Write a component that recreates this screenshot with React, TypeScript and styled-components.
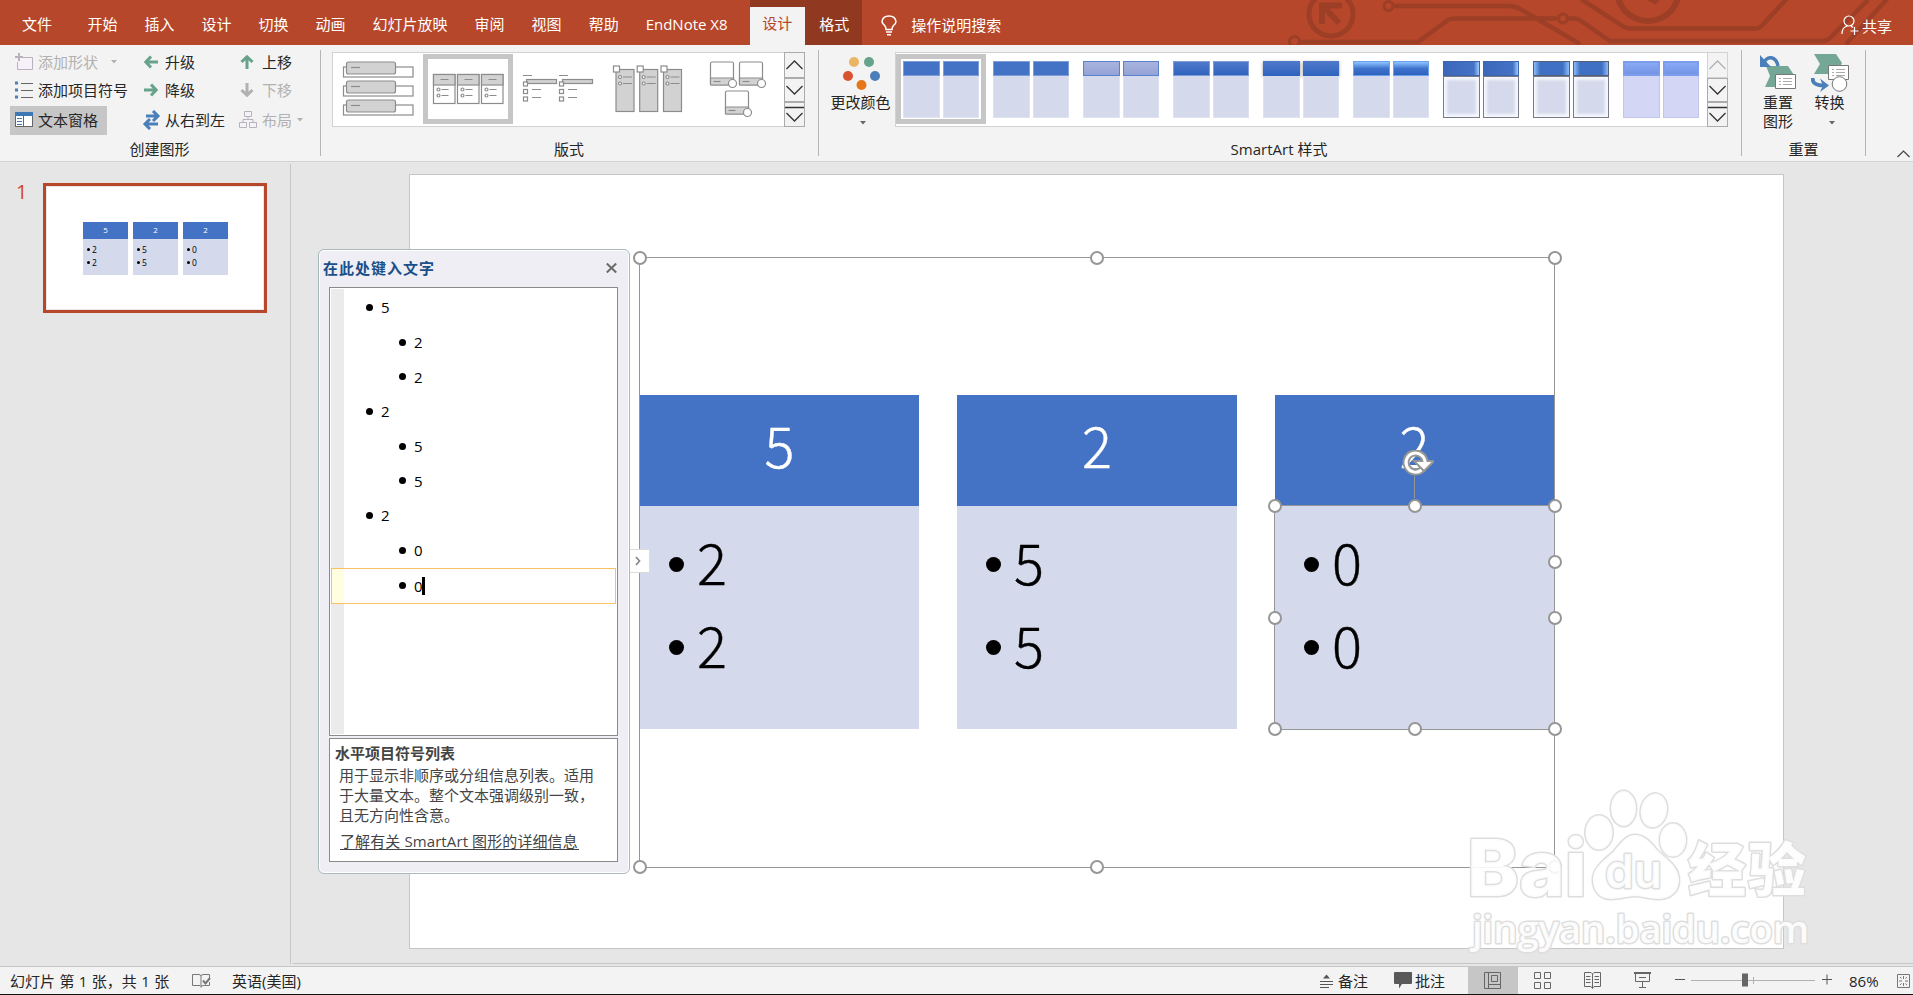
import React from 'react';
import styled, { createGlobalStyle, css } from 'styled-components';

const GlobalStyle = createGlobalStyle`
    * {
        box-sizing: border-box;
    }
    body {
        margin: 0;
        overflow: hidden;
        background: #e6e6e6;
        color: #262626;
        font-family: 'Open Sans', 'Noto Sans CJK SC', sans-serif;
        font-size: 15px;
    }
    svg {
        display: block;
        flex: none;
    }
`;

const tabs = ['开始', '插入', '设计', '切换', '动画', '幻灯片放映', '审阅', '视图', '帮助'];

const columns = [
    { title: '5', items: ['2', '2'] },
    { title: '2', items: ['5', '5'] },
    { title: '2', items: ['0', '0'] },
];

const frameHandles = [
    [0, 0],
    [457, 0],
    [915, 0],
    [0, 609],
    [457, 609],
    [915, 609],
    [915, 304],
];

const shapeHandles = [
    [635, 248],
    [775, 248],
    [915, 248],
    [635, 360],
    [915, 360],
    [635, 471],
    [775, 471],
    [915, 471],
];

const styleKinds = ['flat', 'flat', 'pale', 'subtle', 'shadow', 'gloss', 'inset', 'bevel', 'violet'];

const Circuit = () => (
    <CircuitArt width="620" height="45" viewBox="1285 0 620 45">
        <g fill="none" stroke="#9c3f26" strokeWidth="4.5">
            <ellipse cx="1331" cy="14" rx="22" ry="22" strokeWidth="5" />
            <path d="M1322 24V5.500H1342M1323 6l16 17" strokeWidth="6" />
            <circle cx="1388.500" cy="6" r="4.500" strokeWidth="3" />
            <path d="M1393 6h117q6 0 12 4l58 34" />
            <circle cx="1294.500" cy="41.500" r="5" strokeWidth="3" />
            <path d="M1300 42h118l30-22q3-1.500 7-1.500h102" />
            <circle cx="1563" cy="18.500" r="4.500" strokeWidth="3" />
            <path d="M1568 18.500h6q4 0 8 3l28 19.500h212q5 0 8-3l38-38" />
            <path d="M1581-1l40 26q5 3.500 9 3.500h125q5 0 8-4l24-26M1846 44l42-46" />
            <circle cx="1648" cy="-10" r="31" strokeWidth="6" />
            <path d="M1640-6l15 8 8-8" />
        </g>
    </CircuitArt>
);

const LayoutThumb = ({ index }: { index: number }) => (
    <svg width="90" height="74" fill="#fff" stroke="#8c8c8c" strokeWidth="1.200">
        {index === 0 &&
            [0, 19, 38].map((y) => (
                <g key={y}>
                    <rect x="10.500" y={14 + y} width="69.500" height="10" />
                    <rect x="13.500" y={9 + y} width="49" height="12" rx="2" fill="#d2d2d2" />
                    <path d={`M18 ${14.5 + y}h9`} />
                </g>
            ))}
        {index === 1 &&
            [10.5, 34.5, 58.5].map((x) => (
                <g key={x}>
                    <rect x={x} y="21.500" width="21.500" height="29" />
                    <rect x={x} y="21.500" width="21.500" height="10.500" fill="#d2d2d2" />
                    <path d={`M${x + 7} 26.500h8M${x + 8} 36.500h7M${x + 8} 42.500h7`} />
                    <circle cx={x + 5} cy="36.500" r="1.500" />
                    <circle cx={x + 5} cy="42.500" r="1.500" />
                </g>
            ))}
        {index === 2 &&
            [0, 36].map((x) => (
                <g key={x}>
                    <path d={`M${x + 10} 22.500h9M${x + 19} 36.500h9M${x + 19} 44.500h9`} />
                    <rect x={x + 13.5} y="26.500" width="30" height="4" fill="#d2d2d2" />
                    <rect x={x + 10.5} y="29" width="4" height="4" />
                    <rect x={x + 10.5} y="36.500" width="4" height="4" />
                    <rect x={x + 10.5} y="44" width="4" height="4" />
                </g>
            ))}
        {index === 3 &&
            [0, 23.7, 47.5].map((x) => (
                <g key={x}>
                    <rect x={x + 13} y="16.500" width="18" height="42" fill="#d2d2d2" />
                    <rect x={x + 10.5} y="13" width="6" height="6" />
                    <circle cx={x + 17} cy="24" r="1.500" />
                    <circle cx={x + 17} cy="30.500" r="1.500" />
                    <path d={`M${x + 20} 24h9M${x + 20} 30.500h9`} />
                </g>
            ))}
        {index === 4 &&
            [
                [17.5, 9],
                [46.5, 9],
                [32.5, 38],
            ].map(([x, y]) => (
                <g key={x}>
                    <rect x={x} y={y} width="23" height="23" rx="1.500" />
                    <path d={`M${x} ${y + 16}h23v7h-23z`} fill="#d2d2d2" />
                    <path d={`M${x + 3} ${y + 19.5}h7`} />
                    <circle cx={x + 22} cy={y + 21.5} r="4" />
                </g>
            ))}
    </svg>
);

const GalleryScroll = ({ topDisabled }: { topDisabled?: boolean }) => (
    <ScrollColumn>
        <ScrollButton $h={26} $disabled={topDisabled}>
            <svg width="19" height="12" fill="none" stroke="currentColor" strokeWidth="1.300">
                <path d="M1.500 10l8-8 8 8" />
            </svg>
        </ScrollButton>
        <ScrollButton $h={24}>
            <svg width="19" height="12" fill="none" stroke="currentColor" strokeWidth="1.300">
                <path d="M1.500 2l8 8 8-8" />
            </svg>
        </ScrollButton>
        <ScrollButton $h={25}>
            <svg width="19" height="20" fill="none" stroke="currentColor" strokeWidth="1.300">
                <path d="M0 2.500h19M1.500 8l8 8 8-8" />
            </svg>
        </ScrollButton>
    </ScrollColumn>
);

const MoveArrow = ({ rotate, color = '#67a38c' }: { rotate: number; color?: string }) => (
    <svg width="14" height="14" viewBox="0 0 14 14" fill="none" stroke={color} strokeWidth="3">
        <path transform={`rotate(${rotate} 7 7)`} d="M14 7H2M7 1.500L1.800 7 7 12.500" />
    </svg>
);

const Caret = ({ color = '#666' }: { color?: string }) => (
    <svg width="6" height="4" fill={color}>
        <path d="M0 0h6L3 3.500z" />
    </svg>
);

const CreateGraphic = () => (
    <Group $w={321}>
        <CommandGrid>
            <Command $disabled>
                <svg width="18" height="18" fill="none" stroke="#b9b1bd">
                    <path d="M8 4.500h9.500v12h-15V9" fill="#f6f0f8" />
                    <path d="M4 0v8M0 4h8" strokeWidth="2" />
                </svg>
                添加形状
                <CaretSpace>
                    <Caret color="#b1b1b1" />
                </CaretSpace>
            </Command>
            <Command>
                <MoveArrow rotate={0} />
                升级
            </Command>
            <Command>
                <MoveArrow rotate={90} />
                上移
            </Command>
            <Command>
                <svg width="18" height="18" stroke="#666">
                    <path d="M6 2.500h12M6 9.500h12M6 16.500h12" />
                    <path d="M0 2h3M0 9h3M0 16h3" stroke="#4a7fb9" strokeWidth="3" />
                </svg>
                添加项目符号
            </Command>
            <Command>
                <MoveArrow rotate={180} />
                降级
            </Command>
            <Command $disabled>
                <MoveArrow rotate={270} color="#b1b1b1" />
                下移
            </Command>
            <Command $active>
                <svg width="18" height="15">
                    <rect x=".5" y=".5" width="17" height="14" fill="#fff" stroke="#666" />
                    <path d="M0 0h18v4H0z" fill="#3e78b5" />
                    <path d="M8.500 4v11" stroke="#666" />
                    <path d="M2 6.500h5M2 9.500h5M2 12.500h5" stroke="#3e78b5" />
                </svg>
                文本窗格
            </Command>
            <Command>
                <SwapArrows width="19" height="20" fill="none" stroke="#4a7fb9" strokeWidth="3">
                    <path d="M4 6h12M11 1l5 5-5 5M16 14H3M8 9l-5 5 5 5" />
                </SwapArrows>
                从右到左
            </Command>
            <Command $disabled>
                <Hierarchy width="18" height="17" fill="none" stroke="#b9b1bd">
                    <path d="M5.500.5h7v5h-7zM.5 11.500h7v5h-7zM10.500 11.500h7v5h-7zM9 5.500v3M4 11V8.500h10V11" />
                </Hierarchy>
                布局
                <TightCaret>
                    <Caret color="#b1b1b1" />
                </TightCaret>
            </Command>
        </CommandGrid>
        <GroupLabel $shift={-1}>创建图形</GroupLabel>
    </Group>
);

const Ribbon = () => (
    <RibbonBar>
        <CreateGraphic />
        <Group $w={498}>
            <GalleryRow $left={11}>
                <Gallery>
                    {[0, 1, 2, 3, 4].map((i) => (
                        <GalleryItem key={i} $selected={i === 1}>
                            <LayoutThumb index={i} />
                        </GalleryItem>
                    ))}
                    <GalleryScroll />
                </Gallery>
            </GalleryRow>
            <GroupLabel $shift={-1}>版式</GroupLabel>
        </Group>
        <Group $w={923}>
            <GalleryRow $left={7}>
                <BigButton $w={69}>
                    <svg width="38" height="36">
                        <circle cx="12" cy="8" r="5" fill="#eab565" />
                        <circle cx="27" cy="8" r="5" fill="#67a38c" />
                        <circle cx="6" cy="22" r="5" fill="#d9532f" />
                        <circle cx="33" cy="22" r="5" fill="#4a7fb9" />
                        <circle cx="19.500" cy="31" r="5" fill="#e5771a" />
                    </svg>
                    <span>更改颜色</span>
                    <Caret />
                </BigButton>
                <Gallery>
                    {styleKinds.map((kind, i) => (
                        <GalleryItem key={i} $selected={i === 0}>
                            <StyleThumb>
                                {[0, 1].map((n) => (
                                    <StyleSwatch key={n}>
                                        <SwatchHead $kind={kind} />
                                        <SwatchBody $kind={kind} />
                                    </StyleSwatch>
                                ))}
                            </StyleThumb>
                        </GalleryItem>
                    ))}
                    <GalleryScroll topDisabled />
                </Gallery>
            </GalleryRow>
            <GroupLabel $shift={-2}>SmartArt 样式</GroupLabel>
        </Group>
        <Group $w={124}>
            <GalleryRow $left={10}>
                <BigButton $w={52}>
                    <svg width="36" height="36">
                        <path d="M6 12h22l6 9-6 12H5l5-11z" fill="#74a795" />
                        <path d="M18 12C16 2 7 1 4 9" fill="none" stroke="#4a7fb9" strokeWidth="3.500" />
                        <path d="M0 1v12h11z" fill="#4a7fb9" />
                        <path d="M15.500 20.500h20v14h-20z" fill="#fff" stroke="#777" />
                        <path d="M19 24.500h2m2 0h9M19 27.500h2m2 0h9M19 30.500h2m2 0h9" stroke="#aaa" />
                    </svg>
                    <span>重置</span>
                    <span>图形</span>
                </BigButton>
                <BigButton $w={51}>
                    <svg width="38" height="38">
                        <path d="M3 0h22l6 9-6 11H3l6-10z" fill="#74a795" />
                        <path d="M17.500 11.500h20v14h-20z" fill="#fff" stroke="#777" />
                        <path d="M21 15.500h2m2 0h9M21 18.500h2m2 0h9M21 21.500h2m2 0h9" stroke="#aaa" />
                        <circle cx="28.500" cy="30" r="7.300" fill="#fff" stroke="#777" />
                        <path d="M1.500 24c0 6 4 7.500 11 7.500" fill="none" stroke="#4a7fb9" strokeWidth="4" />
                        <path d="M9 24.500l9 7-9 6.500 3-6.500z" fill="#4a7fb9" />
                    </svg>
                    <span>转换</span>
                    <Caret />
                </BigButton>
            </GalleryRow>
            <GroupLabel>重置</GroupLabel>
        </Group>
        <Collapse>
            <svg width="13" height="8" fill="none" stroke="#444" strokeWidth="1.200">
                <path d="M.5 7l6-6 6 6" />
            </svg>
        </Collapse>
    </RibbonBar>
);

const TextPane = () => (
    <Pane>
        <PaneHeader>
            在此处键入文字
            <svg width="11" height="10" stroke="#6a6a6a" strokeWidth="2">
                <path d="M.8.5l9.400 9M10.200.5l-9.400 9" />
            </svg>
        </PaneHeader>
        <Outline>
            {columns.map((col, c) => (
                <React.Fragment key={c}>
                    <OutlineRow>{col.title}</OutlineRow>
                    {col.items.map((item, i) => (
                        <OutlineRow key={i} $nested $current={c === 2 && i === 1}>
                            {item}
                            {c === 2 && i === 1 && <TextCursor />}
                        </OutlineRow>
                    ))}
                </React.Fragment>
            ))}
        </Outline>
        <Info>
            <InfoTitle>水平项目符号列表</InfoTitle>
            <InfoText>
                用于显示非顺序或分组信息列表。适用
                <br />
                于大量文本。整个文本强调级别一致，
                <br />
                且无方向性含意。
            </InfoText>
            <InfoLink>了解有关 SmartArt 图形的详细信息</InfoLink>
        </Info>
        <PaneToggle>
            <svg width="6" height="10" fill="none" stroke="#8a8a8a" strokeWidth="1.800">
                <path d="M1 1l3.500 4L1 9" />
            </svg>
        </PaneToggle>
    </Pane>
);

const Watermark = () => (
    <Mark width="360" height="180" viewBox="1460 780 360 180">
        <g
            fill="#fff"
            fillOpacity=".9"
            stroke="#dedede"
            strokeWidth="3"
            strokeLinejoin="round"
            paintOrder="stroke"
        >
            <text x="1467" y="896" fontSize="78" textLength="120" lengthAdjust="spacingAndGlyphs" fontFamily="Inter" fontWeight="800">
                Bai
            </text>
            <ellipse cx="1599" cy="832.500" rx="13.500" ry="17" />
            <ellipse cx="1623.500" cy="808.500" rx="12.500" ry="17.500" />
            <ellipse cx="1654" cy="810.500" rx="13" ry="17" transform="rotate(12 1654 810)" />
            <ellipse cx="1673" cy="840" rx="13" ry="16.500" />
            <path d="M1635 835c10 0 16 8 22 15 8 8 22 16 22 30 0 12-9 19-21 19-9 0-16-3-23-3s-14 3-24 3c-12 0-18-9-18-19 0-13 12-20 21-29 7-8 12-16 21-16z" />
            <text x="1605" y="888" fontSize="47" textLength="57" lengthAdjust="spacingAndGlyphs" fontFamily="Inter" fontWeight="600">
                du
            </text>
            <text x="1688" y="891" fontSize="58" textLength="118" fontFamily="Noto Sans CJK SC" fontWeight="900">
                经验
            </text>
            <text x="1472" y="943" fontSize="38" textLength="337" lengthAdjust="spacingAndGlyphs" fontFamily="Open Sans" fontWeight="600">
                jingyan.baidu.com
            </text>
        </g>
    </Mark>
);

const Diagram = () => (
    <DiagramFrame>
        <DiagramColumns>
            {columns.map((col, c) => (
                <div key={c}>
                    <ColumnHead>{col.title}</ColumnHead>
                    <ColumnBody>
                        {col.items.map((item, i) => (
                            <Bullet key={i}>{item}</Bullet>
                        ))}
                    </ColumnBody>
                </div>
            ))}
        </DiagramColumns>
        <ShapeSelection />
        {frameHandles.concat(shapeHandles).map(([x, y], i) => (
            <Handle key={i} $x={x} $y={y} />
        ))}
        <RotateHandle width="34" height="56">
            <path d="M14.500 26v22" stroke="#969696" />
            <path d="M22.500 19A9.500 9.500 0 1 1 25 11" fill="none" stroke="#969696" strokeWidth="7" />
            <path d="M14 11h20l-10 10z" fill="#fff" stroke="#969696" strokeWidth="2" />
            <path d="M21.500 20A9.500 9.500 0 1 1 25 13" fill="none" stroke="#fff" strokeWidth="3" />
        </RotateHandle>
    </DiagramFrame>
);

const Status = () => (
    <StatusBar>
        <SlideCount $w={182}>幻灯片 第 1 张，共 1 张</SlideCount>
        <StatusText $w={40}>
            <svg width="19" height="15" fill="none" stroke="#777">
                <path d="M9 13.500L8 12.500H.5V1.500H7l2 1 2-1h6.500V5M9 2.500v12M17.500 9v3.500H11l-2 1" />
                <path d="M11 7.500l2.500 3L18 5" strokeWidth="2" />
            </svg>
        </StatusText>
        <StatusText $w={1088}>英语(美国)</StatusText>
        <StatusText $w={74}>
            <svg width="13" height="14" stroke="#555">
                <path d="M3 4.500h7L6.500.5z" fill="#555" stroke="none" />
                <path d="M0 7.500h13M0 10.500h13M0 13.500h9" />
            </svg>
            备注
        </StatusText>
        <StatusText $w={74} $gap={3}>
            <svg width="18" height="17" fill="#595959">
                <path d="M1 0h16q1 0 1 1v10q0 1-1 1H8l-3 4.500V12H1q-1 0-1-1V1q0-1 1-1z" />
            </svg>
            批注
        </StatusText>
        <ViewButton $active>
            <svg width="17" height="17" fill="none" stroke="#666">
                <path d="M.5.5h16v16H.5zM4.500.5v16M7.500 3.500h6v6h-6zM4.500 12.500h12" />
            </svg>
        </ViewButton>
        <ViewButton>
            <svg width="17" height="17" fill="none" stroke="#666">
                <path d="M.5.5h6v6h-6zM10.500.5h6v6h-6zM.5 10.500h6v6h-6zM10.500 10.500h6v6h-6z" />
            </svg>
        </ViewButton>
        <ViewButton>
            <svg width="17" height="17" fill="none" stroke="#666">
                <path d="M8.500 2L7 .5H.5v14H7l1.500 2 1.500-2h6.500V.5H10zv14M2 4.500h4.500M2 7.500h4.500M2 10.500h4.500M10.500 4.500H15M10.500 7.500H15M10.500 10.500H15" />
            </svg>
        </ViewButton>
        <ViewButton>
            <svg width="17" height="17" fill="none" stroke="#666">
                <path d="M0 1h17" strokeWidth="2" />
                <path d="M1.500 2v7.500h14V2M5 5.500h7M8.500 9.500v6M5 15.500h7" />
            </svg>
        </ViewButton>
        <Zoom>
            <svg width="157" height="15" stroke="#555">
                <path d="M0 6.500h10M147 6.500h10M152 1.500v10" />
                <path d="M16 7.500h124M78.500 4v7" stroke="#b1b1b1" />
                <path d="M67 .5h6v13h-6z" fill="#666" stroke="none" />
            </svg>
            <Percent>86%</Percent>
            <svg width="13" height="14" fill="none" stroke="#777">
                <path d="M.5.5h12v13H.5z" />
                <path d="M6.500 2v3M6.500 9v3M2 7h3M8 7h3M3 3l1.500 1.500M10 3L8.500 4.500M3 11l1.500-1.500M10 11L8.500 9.500" />
            </svg>
        </Zoom>
    </StatusBar>
);

const App: React.FunctionComponent = () => (
    <Window>
        <GlobalStyle />
        <TitleBar>
            <Circuit />
            <FileTab>文件</FileTab>
            {tabs.map((tab) => (
                <Tab key={tab}>{tab}</Tab>
            ))}
            <AddinTab>EndNote X8</AddinTab>
            <ContextTabs>
                <ActiveTab>设计</ActiveTab>
                <FormatTab>格式</FormatTab>
            </ContextTabs>
            <TellMe>
                <svg width="16" height="21" fill="none" stroke="#fff" strokeWidth="1.500">
                    <path d="M5 14.500q0-2.500-1.500-4.200A6 6 0 0 1 1 6.500C1.500 3 4.500 1 8 1s6.500 2 7 5.500q0 2-2.500 4Q11 12 11 14.500zM5 17h6M6 19.700h4" />
                </svg>
                操作说明搜索
            </TellMe>
            <Share>
                <svg width="18" height="22" fill="none" stroke="#fff" strokeWidth="1.200">
                    <circle cx="8" cy="6" r="5" />
                    <path d="M1 19c0-5 2.500-7.500 5.500-8M10 11l2 1.500M13.500 12v8M9.500 16h8" />
                </svg>
                共享
            </Share>
        </TitleBar>
        <Ribbon />
        <Workspace>
            <SlideList>
                <SlideNumber>1</SlideNumber>
                <Thumbnail>
                    {columns.map((col, c) => (
                        <ThumbColumn key={c}>
                            <ThumbHead>{col.title}</ThumbHead>
                            {col.items.map((item, i) => (
                                <ThumbItem key={i}>{item}</ThumbItem>
                            ))}
                        </ThumbColumn>
                    ))}
                </Thumbnail>
            </SlideList>
            <Editor>
                <Slide>
                    <Diagram />
                </Slide>
            </Editor>
            <TextPane />
        </Workspace>
        <Status />
        <Watermark />
    </Window>
);

export default App;

const Window = styled.div`
    position: relative;
    display: flex;
    flex-direction: column;
    width: 1913px;
    height: 995px;
    overflow: hidden;
    border-bottom: 1px solid #111;
`;

const TitleBar = styled.header`
    position: relative;
    display: flex;
    flex: none;
    height: 45px;
    background: #b7472a;
    color: #fff;
    line-height: 45px;
    padding-top: 2px;
    white-space: nowrap;
`;

const CircuitArt = styled.svg`
    position: absolute;
    left: 1285px;
    top: 0;
`;

const FileTab = styled.div`
    width: 74px;
    padding-left: 22px;
`;

const Tab = styled.div`
    padding: 0 13.500px;
`;

const AddinTab = styled.div`
    width: 118px;
    padding-left: 13.500px;
`;

const ContextTabs = styled.div`
    display: flex;
    width: 112px;
    height: 45px;
    margin-top: -2px;
    background: #903820;
`;

const ActiveTab = styled.div`
    width: 55px;
    margin-top: 7px;
    padding-left: 12px;
    background: #f3f3f3;
    color: #b7472a;
    line-height: 33px;
`;

const FormatTab = styled.div`
    padding: 2px 0 0 14px;
`;

const TellMe = styled.div`
    display: flex;
    align-items: center;
    gap: 14px;
    margin-left: 19px;
    height: 46px;
`;

const Share = styled(TellMe)`
    position: relative;
    gap: 3px;
    height: 48px;
    margin-left: auto;
    margin-right: 21px;
`;

const RibbonBar = styled.div`
    display: flex;
    flex: none;
    height: 117px;
    background: #f3f3f3;
    border-bottom: 1px solid #d2d2d2;
`;

const Group = styled.section<{ $w: number }>`
    display: flex;
    flex-direction: column;
    justify-content: space-between;
    width: ${(p) => p.$w}px;
    height: 106px;
    margin-top: 5px;
    border-right: 1px solid #b5b5b5;
`;

const GroupLabel = styled.div<{ $shift?: number }>`
    height: 22px;
    line-height: 22px;
    text-align: center;
    margin-left: ${(p) => p.$shift ?? 0}px;
    margin-bottom: -4px;
`;

const CommandGrid = styled.div`
    display: grid;
    grid-template-columns: 129px 98px 83px;
    grid-template-rows: 25px 31px 29px;
    padding-left: 10px;
`;

const Command = styled.div<{ $disabled?: boolean; $active?: boolean }>`
    display: flex;
    align-items: center;
    justify-self: start;
    gap: 5px;
    padding: 0 9px 2px 5px;
    white-space: nowrap;
    line-height: 22px;
    color: ${(p) => (p.$disabled ? '#b1b1b1' : '#262626')};
    background: ${(p) => (p.$active ? '#c6c6c6' : 'transparent')};

    &:nth-child(3n + 2) {
        gap: 7px;
    }
    &:nth-child(3n) {
        padding-left: 3px;
        gap: 8px;
    }
`;

const CaretSpace = styled.span`
    padding-left: 8px;
`;

const TightCaret = styled.span`
    margin-left: -3px;
`;

const SwapArrows = styled.svg`
    margin: 0 -3px 0 -2px;
`;

const Hierarchy = styled.svg`
    margin: 0 -3px 0 -1px;
`;

const GalleryRow = styled.div<{ $left: number }>`
    display: flex;
    height: 77px;
    padding-top: 2px;
    padding-left: ${(p) => p.$left}px;
`;

const Gallery = styled.div`
    display: flex;
    height: 75px;
    border: 1px solid #d2d2d2;
    border-right: 0;
    background: #fff;
`;

const GalleryItem = styled.div<{ $selected?: boolean }>`
    width: 90px;
    height: 70px;
    margin-top: 1px;
    box-shadow: ${(p) => (p.$selected ? 'inset 0 0 0 5px #c6c6c6' : 'none')};

    > svg {
        margin-top: -1px;
    }
`;

const ScrollColumn = styled.div`
    width: 21px;
    height: 75px;
    margin-top: -1px;
    margin-left: 1px;
`;

const ScrollButton = styled.div<{ $h: number; $disabled?: boolean }>`
    display: flex;
    align-items: center;
    justify-content: center;
    height: ${(p) => p.$h}px;
    border: 1px solid ${(p) => (p.$disabled ? '#d2d2d2' : '#ababab')};
    background: #f3f3f3;
    color: ${(p) => (p.$disabled ? '#b1b1b1' : '#333')};
`;

const StyleThumb = styled.div`
    display: flex;
    gap: 3px;
    padding: 7px;
`;

const StyleSwatch = styled.div`
    width: 36.500px;
`;

const headKinds: Record<string, ReturnType<typeof css>> = {
    flat: css`
        background: #4472c4;
        border: 1px solid #7d9cd8;
    `,
    pale: css`
        background: linear-gradient(#a8b4dc, #93a3d6);
        border: 1px solid #5b82cc;
    `,
    subtle: css`
        background: linear-gradient(#5079ca, #2f63bf);
        border: 1px solid #7d9cd8;
    `,
    shadow: css`
        background: linear-gradient(#5079ca, #2f63bf);
        box-shadow: 0 1px 3px #999;
    `,
    gloss: css`
        background: linear-gradient(#8fc4ff, #3f73cc 50%, #2f62bc);
        border: 1px solid #6ba0ee;
    `,
    inset: css`
        background: linear-gradient(90deg, #3c68bb, #4472c4 85%, #9dcbff);
        border: 1px solid #3d64a8;
    `,
    bevel: css`
        background: linear-gradient(90deg, #8dbcf6, #3f70c4 18%, #3f70c4 82%, #8dbcf6);
        border: 1px solid #555f73;
    `,
    violet: css`
        background: linear-gradient(#8aaaf6, #7394e4);
        border: 2px solid #7c9cec;
    `,
};

const SwatchHead = styled.div<{ $kind: string }>`
    height: 15px;
    ${(p) => headKinds[p.$kind]}
`;

const SwatchBody = styled.div<{ $kind: string }>`
    height: 42px;
    background: ${(p) => (p.$kind === 'violet' ? '#d3d6f5' : '#d4d9eb')};
    border: 1px solid ${(p) => (p.$kind === 'violet' ? '#c3c6e8' : '#dfe3f1')};
    border-top: 0;
    ${(p) =>
        (p.$kind === 'inset' || p.$kind === 'bevel') &&
        css`
            border: 1px solid #777c88;
            box-shadow: inset 0 0 3px 3px #f5f7fd;
        `}
`;

const BigButton = styled.div<{ $w: number }>`
    display: flex;
    flex-direction: column;
    align-items: center;
    width: ${(p) => p.$w}px;
    height: 85px;
    white-space: nowrap;

    > svg:first-child {
        height: 38px;
        margin-top: 2px;
    }
    > span {
        height: 19px;
        line-height: 21px;
    }
    > svg:last-child {
        margin-top: 10px;
        margin-left: 4px;
    }
`;

const Collapse = styled.div`
    margin: 105px 0 0 31px;
`;

const Workspace = styled.main`
    position: relative;
    display: flex;
    flex: none;
    height: 805px;
    border-bottom: 1px solid #c6c6c6;
`;

const SlideList = styled.aside`
    display: flex;
    align-items: flex-start;
    width: 291px;
    height: 800px;
    margin-top: 2px;
    padding-top: 19px;
    border-right: 1px solid #c6c6c6;
`;

const SlideNumber = styled.div`
    width: 43px;
    padding-left: 16px;
    color: #d24726;
    font-size: 20px;
    line-height: 17px;
`;

const Thumbnail = styled.div`
    display: flex;
    gap: 5px;
    width: 224px;
    height: 130px;
    padding: 36px 0 0 37px;
    border: 3px solid #b7472a;
    background: #fff;
    box-shadow: inset 0 0 0 1px #e6e6e6;
`;

const ThumbColumn = styled.div`
    width: 45px;
    height: 53px;
    background: #d4d9eb;
`;

const ThumbHead = styled.div`
    height: 17px;
    margin-bottom: 4px;
    background: #4472c4;
    color: #fff;
    font-size: 8px;
    line-height: 16px;
    text-align: center;
`;

const ThumbItem = styled.div`
    display: flex;
    align-items: center;
    gap: 2px;
    height: 13px;
    padding-left: 4px;
    color: #000;
    font-size: 8.500px;
    line-height: 13px;

    &::before {
        content: '';
        width: 3px;
        height: 3px;
        border-radius: 50%;
        background: #000;
    }
`;

const Editor = styled.div`
    flex: 1;
    height: 802px;
    margin-left: 2px;
    padding: 12px 0 0 116px;
    border-bottom: 1px solid #c6c6c6;
`;

const Slide = styled.div`
    width: 1375px;
    height: 775px;
    padding: 82px 0 0 229px;
    border: 1px solid #c6c6c6;
    background: #fff;
`;

const DiagramFrame = styled.div`
    position: relative;
    width: 916px;
    height: 611px;
    padding-top: 137px;
    border: 1px solid #969696;
`;

const DiagramColumns = styled.div`
    display: grid;
    grid-template-columns: 279px 280px 279px;
    gap: 38px;
`;

const ColumnHead = styled.div`
    height: 111px;
    background: #4472c4;
    color: #fff;
    font-family: 'Noto Sans CJK SC', sans-serif;
    font-weight: 300;
    font-size: 56px;
    line-height: 97px;
    text-align: center;
    -webkit-text-stroke: 0.4px #fff;
`;

const ColumnBody = styled.div`
    height: 223px;
    padding: 13px 0 0 29px;
    background: #d4d9eb;
`;

const Bullet = styled.div`
    display: flex;
    align-items: center;
    gap: 13px;
    height: 83px;
    color: #000;
    font-family: 'Noto Sans CJK SC', sans-serif;
    font-weight: 300;
    font-size: 56px;
    line-height: 83px;
    -webkit-text-stroke: 0.4px #000;

    &::before {
        content: '';
        width: 15px;
        height: 15px;
        margin-top: 7px;
        border-radius: 50%;
        background: #000;
    }
`;

const ShapeSelection = styled.div`
    position: absolute;
    left: 634px;
    top: 247px;
    width: 281px;
    height: 225px;
    border: 1px solid #969696;
`;

const Handle = styled.div<{ $x: number; $y: number }>`
    position: absolute;
    left: ${(p) => p.$x - 7}px;
    top: ${(p) => p.$y - 7}px;
    width: 14px;
    height: 14px;
    border: 2.500px solid #969696;
    border-radius: 50%;
    background: #fff;
`;

const RotateHandle = styled.svg`
    position: absolute;
    left: 760px;
    top: 192px;
`;

const Pane = styled.div`
    position: absolute;
    left: 318px;
    top: 87px;
    width: 312px;
    height: 625px;
    padding: 0 11px 0 10px;
    border: 1px solid #a9babc;
    border-radius: 6px;
    background: #eeeef4;
    box-shadow: inset 0 0 0 1px #fff;
`;

const PaneHeader = styled.div`
    display: flex;
    align-items: center;
    justify-content: space-between;
    height: 37px;
    margin-left: -6px;
    padding-right: 1px;
    padding-bottom: 2px;
    color: #1a4f8a;
    font-weight: bold;
    letter-spacing: 1px;
`;

const Outline = styled.div`
    height: 449px;
    padding: 2px 1px;
    border: 1px solid #8a8a8a;
    background: linear-gradient(#ebebeb, #ebebeb) 1px 1px / 13px 445px no-repeat #fff;
`;

const OutlineRow = styled.div<{ $nested?: boolean; $current?: boolean }>`
    display: flex;
    align-items: center;
    height: ${(p) => (p.$current ? 36 : 34.7)}px;
    padding-left: ${(p) => (p.$nested ? 67 : 34)}px;
    border: 1px solid ${(p) => (p.$current ? '#fabe64' : 'transparent')};
    background: ${(p) =>
        p.$current ? 'linear-gradient(90deg, #fffee0 12px, #fff 12px)' : 'none'};
    color: #000;

    &::before {
        content: '';
        width: 7px;
        height: 7px;
        margin-right: 8px;
        border-radius: 50%;
        background: #000;
    }
`;

const TextCursor = styled.span`
    width: 3px;
    height: 18px;
    margin-left: -1px;
    background: #000;
`;

const Info = styled.div`
    height: 124px;
    margin-top: 2px;
    padding: 3px 5px;
    border: 1px solid #8a8a8a;
    background: #fff;
    color: #444;
    white-space: nowrap;
`;

const InfoTitle = styled.div`
    font-weight: bold;
    line-height: 22px;
`;

const InfoText = styled.div`
    padding-left: 4px;
    padding-top: 1px;
    line-height: 20px;
`;

const InfoLink = styled.div`
    width: 239px;
    margin-left: 5px;
    margin-top: 7px;
    height: 18px;
    line-height: 19px;
    letter-spacing: 0.1px;
    border-bottom: 1px solid #444;
`;

const PaneToggle = styled.div`
    position: absolute;
    left: 311px;
    top: 299px;
    display: flex;
    align-items: center;
    justify-content: center;
    width: 20px;
    height: 24px;
    padding-right: 3px;
    border: 1px solid #dcdcdc;
    border-left: 0;
    background: #fff;
`;

const StatusBar = styled.footer`
    display: flex;
    align-items: center;
    flex: none;
    height: 27px;
    padding-left: 10px;
    background: #f3f3f3;
`;

const StatusText = styled.div<{ $w: number; $gap?: number }>`
    display: flex;
    align-items: center;
    gap: ${(p) => p.$gap ?? 5}px;
    width: ${(p) => p.$w}px;
    line-height: 26px;
    white-space: nowrap;
`;

const SlideCount = styled(StatusText)`
    word-spacing: 0.5px;
`;

const ViewButton = styled.div<{ $active?: boolean }>`
    display: flex;
    align-items: center;
    justify-content: center;
    width: 50px;
    height: 27px;
    padding-right: 1px;
    background: ${(p) => (p.$active ? '#c6c6c6' : 'transparent')};
`;

const Zoom = styled.div`
    display: flex;
    align-items: center;
    margin-left: 7px;
`;

const Percent = styled.span`
    width: 48px;
    margin-left: 17px;
`;

const Mark = styled.svg`
    position: absolute;
    left: 1460px;
    top: 780px;
`;
